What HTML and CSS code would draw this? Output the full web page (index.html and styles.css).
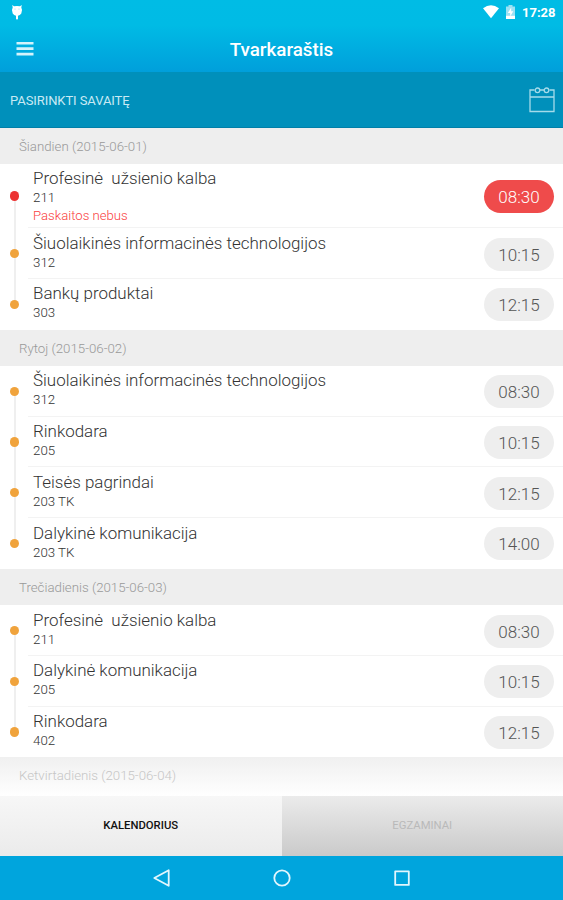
FILE: index.html
```html
<!DOCTYPE html>
<html lang="lt">
<head>
<meta charset="utf-8">
<title>Tvarkaraštis</title>
<link rel="stylesheet" href="styles.css">
</head>
<body>
<div class="app">
  <header class="top">
    <div class="status">
      <svg class="droid" width="12" height="16" viewBox="0 0 12 16" fill="#fff"><path d="M1.200 0 3 1.300Q6 .5 9 1.300L10.800 0 10.300 2.600Q12 5.500 10.300 8.500Q9 10.500 7 10.700V13.700Q6 15.500 5 13.700V10.700Q3 10.500 1.700 8.500Q0 5.500 1.700 2.600Z"/><circle cx="4" cy="4" r=".6" fill="#8cdcf2"/><circle cx="8" cy="4" r=".6" fill="#8cdcf2"/></svg>
      <div class="status-right">
        <svg class="wifi" width="16" height="14" viewBox="0 0 16 14" fill="#fff"><path d="M8 13.300 0 3.200Q8-2.800 16 3.200Z"/></svg>
        <svg class="battery" width="9" height="14" viewBox="0 0 9 14"><path d="M0 1.500H2.500V0H6.500V1.500H9V14H0Z" fill="#9ce2f4"/><path d="M0 10.800H9V14H0Z" fill="#fff"/><path d="M5.200 2.500 1.800 8H4.200V11.500L7.300 6.300H5.200Z" fill="#fff"/></svg>
        <span class="clock">17:28</span>
      </div>
    </div>
    <div class="titlebar">
      <svg class="menu" width="18" height="14" viewBox="0 0 18 14" fill="#d4f3fc"><path d="M.5 0H17.500V2.600H.5ZM.5 5.300H17.500V7.900H.5ZM.5 10.800H17.500V13.400H.5Z"/></svg>
      <h1>Tvarkaraštis</h1>
    </div>
  </header>
  <div class="week">
    <span class="week-label">PASIRINKTI SAVAITĘ</span>
    <svg width="26" height="26" viewBox="0 0 26 26" fill="none" stroke="#a5dbea" stroke-width="1.300"><path d="M5.500 3H1V24.500H25V3H20.500M11 3H15M1 10H25"/><circle cx="8.500" cy="3.300" r="2.300"/><circle cx="17.500" cy="3.300" r="2.300"/></svg>
  </div>
  <main class="list">
    <h2>Šiandien (2015-06-01)</h2>
    <section>
      <div class="row first alert"><i class="dot"></i><div class="info"><b>Profesinė&nbsp; užsienio kalba</b><small>211</small><em>Paskaitos nebus</em></div><span class="pill">08:30</span></div>
      <div class="row"><i class="dot"></i><div class="info"><b>Šiuolaikinės informacinės technologijos</b><small>312</small></div><span class="pill">10:15</span></div>
      <div class="row last"><i class="dot"></i><div class="info"><b>Bankų produktai</b><small>303</small></div><span class="pill">12:15</span></div>
    </section>
    <h2>Rytoj (2015-06-02)</h2>
    <section>
      <div class="row first"><i class="dot"></i><div class="info"><b>Šiuolaikinės informacinės technologijos</b><small>312</small></div><span class="pill">08:30</span></div>
      <div class="row"><i class="dot"></i><div class="info"><b>Rinkodara</b><small>205</small></div><span class="pill">10:15</span></div>
      <div class="row"><i class="dot"></i><div class="info"><b>Teisės pagrindai</b><small>203 TK</small></div><span class="pill">12:15</span></div>
      <div class="row last"><i class="dot"></i><div class="info"><b>Dalykinė komunikacija</b><small>203 TK</small></div><span class="pill">14:00</span></div>
    </section>
    <h2>Trečiadienis (2015-06-03)</h2>
    <section>
      <div class="row first"><i class="dot"></i><div class="info"><b>Profesinė&nbsp; užsienio kalba</b><small>211</small></div><span class="pill">08:30</span></div>
      <div class="row"><i class="dot"></i><div class="info"><b>Dalykinė komunikacija</b><small>205</small></div><span class="pill">10:15</span></div>
      <div class="row last"><i class="dot"></i><div class="info"><b>Rinkodara</b><small>402</small></div><span class="pill">12:15</span></div>
    </section>
    <h2 class="fading">Ketvirtadienis (2015-06-04)</h2>
  </main>
  <div class="tabs">
    <div class="tab active">KALENDORIUS</div>
    <div class="tab">EGZAMINAI</div>
  </div>
  <nav class="nav">
    <svg width="18" height="20" viewBox="0 0 18 20"><path d="M1.300 10 15.700 2.200V17.800Z"/></svg>
    <svg width="18" height="20" viewBox="0 0 18 20"><circle cx="9" cy="10" r="7.700"/></svg>
    <svg width="18" height="20" viewBox="0 0 18 20"><rect x="2.200" y="3.300" width="13.600" height="13.600"/></svg>
  </nav>
</div>
</body>
</html>
```
FILE: styles.css
```css
* { box-sizing: border-box; }
body { margin: 0; font-family: Roboto, "Liberation Sans", sans-serif; background: #fff; }
.app { width: 563px; height: 900px; display: flex; flex-direction: column; overflow: hidden; }
svg { display: block; flex: none; }

.top { height: 72px; flex: none; background: linear-gradient(#00bce5 0, #00bbe5 35%, #009fdb 100%); color: #fff; }
.status { height: 25px; display: flex; justify-content: space-between; align-items: flex-start; padding: 5px 8px 0 11px; }
.status-right { display: flex; }
.wifi { margin-right: 7px; }
.battery { margin-right: 7px; }
.clock { font-size: 13px; line-height: 16px; font-weight: 700; width: 33px; }
.titlebar { height: 47px; display: grid; grid-template-columns: 1fr auto 1fr; align-items: center; padding: 0 16px; }
.titlebar h1 { margin: 0; font-size: 18.800px; font-weight: 500; line-height: 24px; padding-top: 2px; }

.week { height: 55.500px; flex: none; background: #0090bb; border-bottom: 1px solid #007fa8; display: flex; align-items: center; justify-content: space-between; padding: 2px 8px 0 10px; color: #c8eaf4; font-size: 13px; }
.week-label { letter-spacing: -.08px; }

.list { height: 668.500px; flex: none; overflow: hidden; }
h2 { margin: 0; height: 36.400px; padding-left: 19px; background: #eee; color: #999; font-size: 13.250px; font-weight: 300; line-height: 38px; }
h2.fading { height: 40px; background: linear-gradient(#f0f0f0, #fff); color: #c6c6c6; }

.row { height: 50.700px; display: grid; grid-template-columns: 28px 1fr 79px; position: relative; align-items: center; }
.row.alert { height: 64.400px; }
.row::before { content: ""; position: absolute; left: 14px; top: 0; bottom: 0; width: 1.500px; background: #efefef; }
.row.first::before { top: 50%; }
.row.last::before { bottom: 50%; }
.row:not(.last)::after { content: ""; position: absolute; left: 28px; right: 0; bottom: 0; height: 1px; background: #f3f3f3; }
.dot { position: relative; width: 9.400px; height: 9.400px; border-radius: 50%; background: #f0a33c; margin-left: 10px; }
.alert .dot { background: #ec3434; }
.info { align-self: start; padding: 3.400px 0 0 5px; white-space: nowrap; }
.info b { display: block; font-size: 16.960px; line-height: 22px; font-weight: 300; color: #333; }
.info small { display: block; font-size: 13.300px; line-height: 18px; font-weight: 300; color: #333; }
.info em { display: block; font-size: 13.150px; line-height: 18px; font-style: normal; font-weight: 300; color: #fa4040; }
.pill { width: 70px; height: 33px; border-radius: 17px; background: #eee; color: #555; font-size: 17px; font-weight: 300; line-height: 34px; text-align: center; margin-top: 1px; }
.alert .pill { background: #ef4b4b; color: #fff; }

.tabs { height: 60px; flex: none; display: grid; grid-template-columns: 1fr 1fr; font-size: 11.300px; line-height: 60px; text-align: center; border-bottom: 1px solid #9fcfe0; }
.tab { background: linear-gradient(#ebebeb, #cacaca); color: #b9b9b9; font-weight: 400; }
.tab.active { background: linear-gradient(#f7f7f7, #ebebeb); color: #111; font-weight: 500; }
.nav { flex: 1; background: #00a5dd; display: flex; justify-content: center; gap: 102px; align-items: center; }
.nav svg { fill: none; stroke: #e2f6fd; stroke-width: 1.800; stroke-linejoin: round; }
```
